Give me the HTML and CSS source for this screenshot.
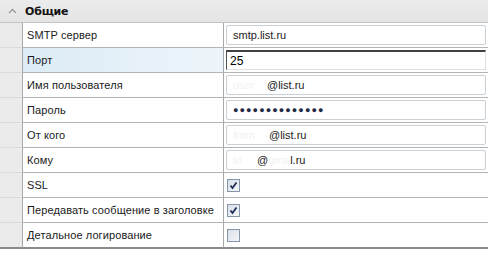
FILE: index.html
```html
<!DOCTYPE html>
<html>
<head>
<meta charset="utf-8">
<link rel="stylesheet" href="styles.css">
</head>
<body>
<div class="grid">
  <div class="header">
    <span class="chev"><svg width="9" height="6" viewBox="0 0 9 6"><path d="M1 5 L4.5 1.5 L8 5" fill="none" stroke="#9a9a9a" stroke-width="1.3"/></svg></span>
    <span class="title">Общие</span>
  </div>

  <div class="row">
    <div class="gut"></div>
    <div class="label">SMTP сервер</div>
    <div class="value"><div class="box">smtp.list.ru</div></div>
  </div>
  <div class="row">
    <div class="gut"></div>
    <div class="label sel">Порт</div>
    <div class="value"><div class="box edit">25</div></div>
  </div>
  <div class="row">
    <div class="gut"></div>
    <div class="label">Имя пользователя</div>
    <div class="value"><div class="box"><span class="blur w34">user</span>@list.ru</div></div>
  </div>
  <div class="row">
    <div class="gut"></div>
    <div class="label">Пароль</div>
    <div class="value"><div class="box pass">●●●●●●●●●●●●●●</div></div>
  </div>
  <div class="row">
    <div class="gut"></div>
    <div class="label">От кого</div>
    <div class="value"><div class="box"><span class="blur w36">from</span>@list.ru</div></div>
  </div>
  <div class="row">
    <div class="gut"></div>
    <div class="label">Кому</div>
    <div class="value"><div class="box"><span class="blur w24">to</span>@<span class="blur w22">gma</span>l.ru</div></div>
  </div>
  <div class="row">
    <div class="gut"></div>
    <div class="label">SSL</div>
    <div class="value"><span class="cb on"><svg width="9" height="9" viewBox="0 0 9 9"><path d="M1.5 4.5 L3.5 7 L7.5 1.5" fill="none" stroke="#1c2f5a" stroke-width="1.8"/></svg></span></div>
  </div>
  <div class="row">
    <div class="gut"></div>
    <div class="label">Передавать сообщение в заголовке</div>
    <div class="value"><span class="cb on"><svg width="9" height="9" viewBox="0 0 9 9"><path d="M1.5 4.5 L3.5 7 L7.5 1.5" fill="none" stroke="#1c2f5a" stroke-width="1.8"/></svg></span></div>
  </div>
  <div class="row last">
    <div class="gut"></div>
    <div class="label">Детальное логирование</div>
    <div class="value"><span class="cb"></span></div>
  </div>
</div>
</body>
</html>
```
FILE: styles.css
```css
html, body {
  margin: 0;
  padding: 0;
  background: #ffffff;
}
.grid {
  width: 488px;
  font-family: "Liberation Sans", Arial, sans-serif;
  font-size: 11px;
  letter-spacing: 0.1px;
  color: #1a1a1a;
}
.header {
  height: 22px;
  background: linear-gradient(#ececec, #e4e4e4);
  border-bottom: 1px solid #c4c4c4;
  display: flex;
  align-items: center;
}
.chev {
  width: 25px;
  display: flex;
  justify-content: center;
}
.title {
  font-family: "DejaVu Sans", Tahoma, sans-serif;
  font-weight: bold;
  font-size: 11px;
  letter-spacing: -0.2px;
  color: #111;
}
.row {
  display: grid;
  grid-template-columns: 22px 201px 1fr;
  height: 25px;
}
.gut {
  background: #ebebeb;
  border-bottom: 1px solid #dadada;
}
.label {
  border-left: 1px solid #a8a8a8;
  border-bottom: 1px solid #b4b4b4;
  display: flex;
  align-items: center;
  padding-left: 4px;
  white-space: nowrap;
  overflow: hidden;
}
.label.sel {
  background: linear-gradient(90deg, #dcebf6, #e8f2f9 70%, #eef5fa);
}
.value {
  border-left: 1px solid #a8a8a8;
  border-bottom: 1px solid #b4b4b4;
  display: flex;
  align-items: center;
  padding-left: 2px;
  padding-right: 2px;
}
.row.last .gut,
.row.last .label,
.row.last .value {
  border-bottom: 2px solid #8a8a8a;
}
.row.last { height: 26px; }
.box {
  flex: 1;
  border: 1px solid #c9d0d6;
  border-radius: 2px;
  background: #fff;
  display: flex;
  align-items: center;
  padding-left: 6px;
  font-size: 11px;
  letter-spacing: 0;
  color: #222;
  box-sizing: border-box;
  height: 20px;
  white-space: nowrap;
}
.box.edit {
  border-radius: 0;
  border-top: 2px solid #404040;
  border-left: 1px solid #505050;
  border-right: 1px solid #e0e0e0;
  border-bottom: 1px solid #e0e0e0;
  padding-left: 3px;
  font-size: 12px;
  color: #000;
}
.box.pass {
  color: #1f2a44;
  font-size: 9px;
  letter-spacing: 1.1px;
}
.blur {
  color: #f2f2f2;
  display: inline-block;
  overflow: hidden;
}
.w34 { width: 34px; }
.w36 { width: 36px; }
.w24 { width: 24px; }
.w22 { width: 22px; }
.cb {
  width: 11px;
  height: 11px;
  border: 1px solid #8797ab;
  background: linear-gradient(135deg, #d9dfe8, #f4f6f9);
  display: flex;
  align-items: center;
  justify-content: center;
  margin-left: 1px;
}
```
